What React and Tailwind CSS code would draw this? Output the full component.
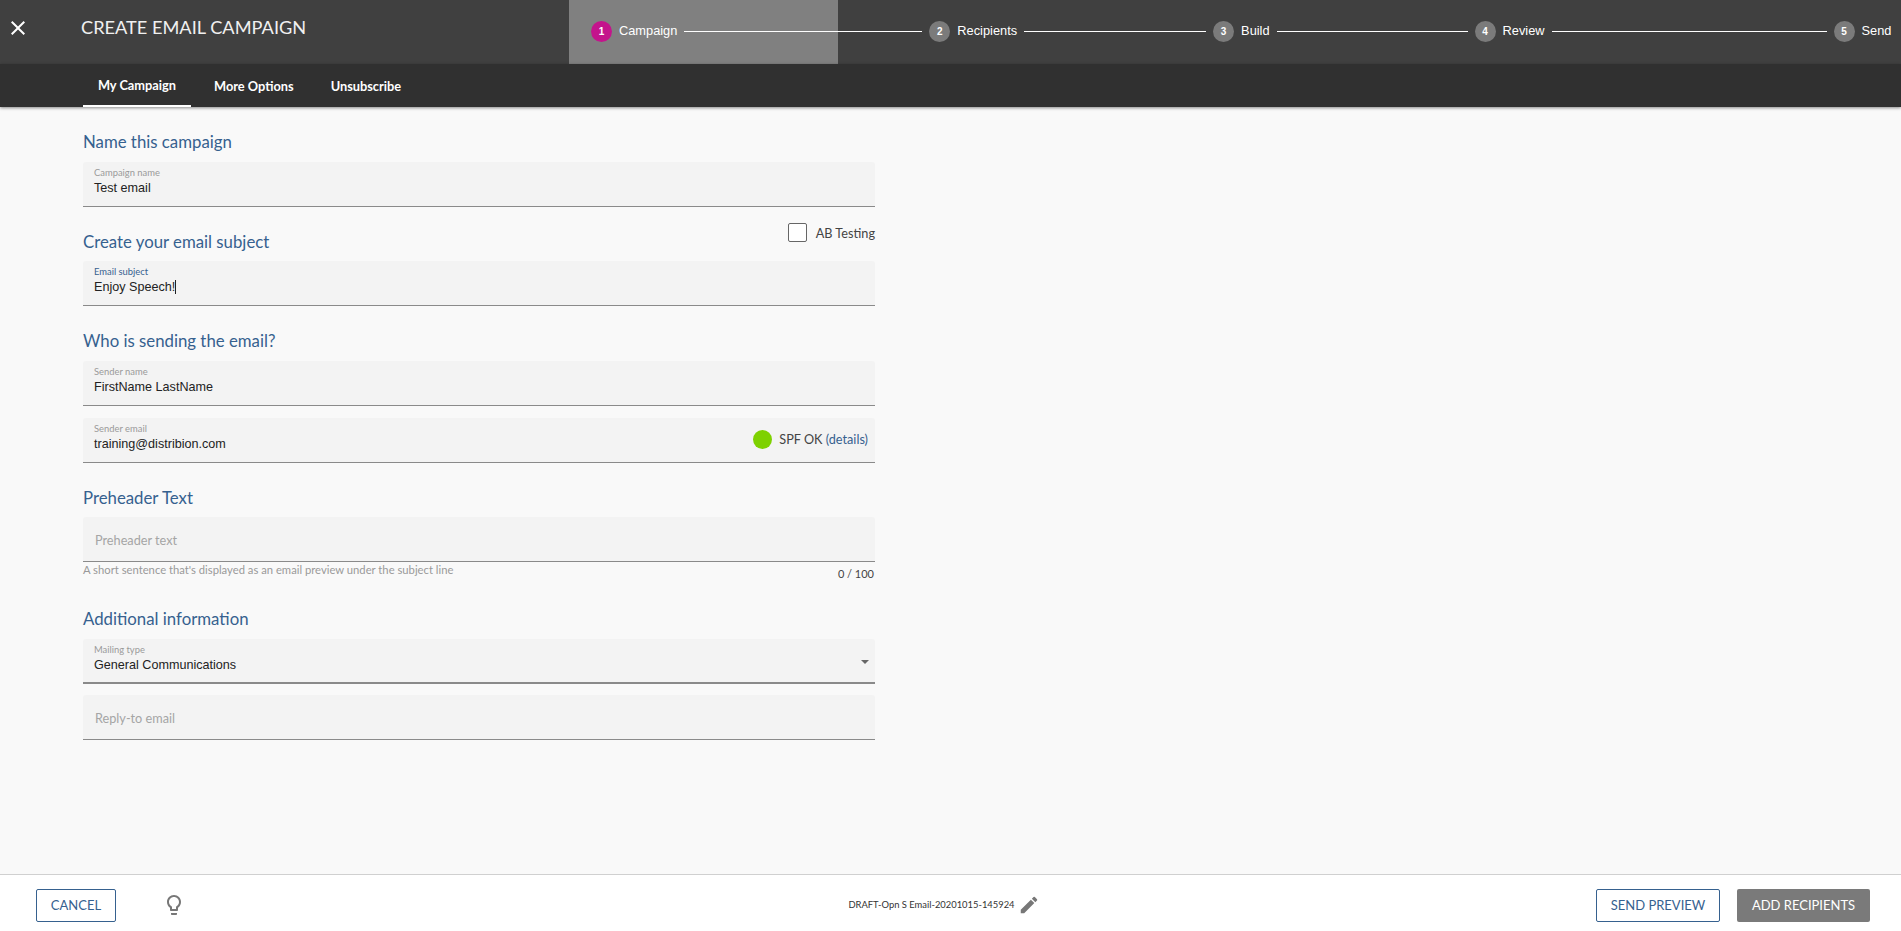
const lato = "font-['Lato',sans-serif]";
const arial = "font-['Liberation_Sans',Arial,sans-serif]";

function MatIcon({ d, className }) {
  return (
    <svg viewBox="0 0 24 24" className={className} fill="currentColor">
      <path d={d} />
    </svg>
  );
}

function Step({ n, label, active, line }) {
  return (
    <div className="flex items-center">
      <div className={`w-[21px] h-[21px] rounded-full flex items-center justify-center text-white text-[10px] font-bold ${active ? "bg-[#c4148c]" : "bg-[#7b7b7b]"}`}>{n}</div>
      <span className="ml-[7px] text-white text-[12.8px] leading-none -mt-[1px]">{label}</span>
      {line ? <div style={{ width: line }} className="ml-[7px] h-px bg-white" /> : null}
    </div>
  );
}

function Heading({ children, className = "" }) {
  return <h2 className={`${lato} text-[16.8px] leading-[22px] text-[#36618f] font-normal ${className}`}>{children}</h2>;
}

function Field({ label, value, placeholder, labelBlue, thick, caret, children, className = "" }) {
  return (
    <div className={`relative h-[45px] rounded-t-[3px] bg-[#f3f3f3] border-b border-[#8a8a8a] ${thick ? "border-b-2" : ""} ${className}`}>
      {placeholder ? (
        <div className={`${lato} pl-[12px] pt-[15px] text-[12.7px] leading-4 text-[#a5a5a5]`}>{placeholder}</div>
      ) : (
        <div className="pl-[11px] pt-[5px]">
          <div className={`${lato} text-[9.4px] leading-[11px] ${labelBlue ? "text-[#36618f]" : "text-[#9a9a9a]"}`}>{label}</div>
          <div className={`${arial} mt-[2px] text-[12.6px] leading-[16px] text-[#222] flex items-center`}>
            {value}
            {caret ? <span className="inline-block w-px h-[14px] bg-[#222]" /> : null}
          </div>
        </div>
      )}
      {children}
    </div>
  );
}

export default function App() {
  return (
    <div className="h-[931px] w-full flex flex-col bg-[#f9f9f9] overflow-hidden">
      <header className="relative h-[64px] shrink-0 bg-[#404040] flex">
        <div className="absolute left-[569px] top-0 w-[269px] h-full bg-[#808080]" />
        <MatIcon d="M19 6.41L17.59 5 12 10.59 6.41 5 5 6.41 10.59 12 5 17.59 6.41 19 12 13.41 17.59 19 19 17.59 13.41 12z" className="w-[24px] h-[24px] text-white ml-[6px] mt-[16px]" />
        <h1 className={`${lato} ml-[51px] mt-[15px] text-[18.2px] leading-[24px] text-[#f0f0f0] font-normal`}>CREATE EMAIL CAMPAIGN</h1>
        <div className={`${arial} absolute left-[591px] top-[21px] flex items-center`}>
          <Step n="1" label="Campaign" active line={238} />
          <div className="w-[7px]" />
          <Step n="2" label="Recipients" line={182} />
          <div className="w-[7px]" />
          <Step n="3" label="Build" line={191} />
          <div className="w-[7px]" />
          <Step n="4" label="Review" line={275} />
          <div className="w-[7px]" />
          <Step n="5" label="Send" />
        </div>
      </header>

      <nav className={`${lato} h-[43px] shrink-0 bg-[#303030] pl-[83px] flex text-white text-[12.8px] font-bold shadow-[0_1px_3px_rgba(0,0,0,0.45)] relative`}>
        <div className="w-[108px] pt-[2px] flex items-center justify-center border-b-2 border-white">My Campaign</div>
        <div className="ml-[23px] pt-[3px] flex items-center">More Options</div>
        <div className="ml-[37px] pt-[3px] flex items-center">Unsubscribe</div>
      </nav>

      <main className="flex-1 pl-[83px]">
        <div className="w-[792px]">
          <Heading className="mt-[24px] mb-[9px]">Name this campaign</Heading>
          <Field label="Campaign name" value="Test email" />

          <div className="flex justify-between mt-[24px] mb-[8px] items-start">
            <Heading>Create your email subject</Heading>
            <label className={`${lato} flex items-center text-[12.7px] leading-[18px] text-[#444] -mt-[8px]`}>
              <span className="w-[19px] h-[19px] rounded-[2px] border border-[#666] bg-white mr-[9px]" />
              AB Testing
            </label>
          </div>
          <Field label="Email subject" value="Enjoy Speech!" labelBlue caret />

          <Heading className="mt-[24px] mb-[9px]">Who is sending the email?</Heading>
          <Field label="Sender name" value="FirstName LastName" />
          <Field label="Sender email" value="training@distribion.com" className="mt-[12px]">
            <div className={`${lato} absolute right-[7px] top-[12px] flex items-center text-[12.7px] text-[#444]`}>
              <span className="w-[19px] h-[19px] rounded-full bg-[#7ed100] mr-[7px]" />
              SPF OK&nbsp;<span className="text-[#36618f]">(details)</span>
            </div>
          </Field>

          <Heading className="mt-[24px] mb-[8px]">Preheader Text</Heading>
          <Field placeholder="Preheader text" />
          <div className={`${lato} flex justify-between text-[#999] text-[11.25px] leading-[13px] pt-[1px]`}>
            <span>A short sentence that's displayed as an email preview under the subject line</span>
            <span className="text-[#444] text-[11px] pt-[4px] pr-[1px]">0 / 100</span>
          </div>

          <Heading className="mt-[28px] mb-[9px]">Additional information</Heading>
          <Field label="Mailing type" value="General Communications" thick>
            <div className="absolute right-[6px] top-[21px] w-0 h-0 border-l-[4px] border-r-[4px] border-t-[4px] border-l-transparent border-r-transparent border-t-[#666]" />
          </Field>
          <Field placeholder="Reply-to email" className="mt-[11px]" />
        </div>
      </main>

      <footer className="h-[57px] shrink-0 bg-white border-t border-[#d0d0d0] flex items-center pl-[36px] pr-[31px] pt-[4px]">
        <button className={`${lato} w-[80px] h-[33px] pt-[1px] rounded-[2px] border border-[#36618f] text-[#36618f] text-[13px]`}>CANCEL</button>
        <MatIcon d="M9 21c0 .55.45 1 1 1h4c.55 0 1-.45 1-1v-1H9v1zm3-19C8.14 2 5 5.14 5 9c0 2.38 1.19 4.47 3 5.74V17c0 .55.45 1 1 1h6c.55 0 1-.45 1-1v-2.26c1.81-1.27 3-3.36 3-5.74 0-3.86-3.14-7-7-7zm2.85 11.1l-.85.6V16h-4v-2.3l-.85-.6C7.8 12.16 7 10.63 7 9c0-2.76 2.24-5 5-5s5 2.24 5 5c0 1.63-.8 3.16-2.15 4.1z" className="ml-[46px] w-[24px] h-[24px] text-[#777]" />
        <div className="flex-1 flex items-center justify-center pl-[106px]">
          <span className={`${lato} text-[9.4px] text-[#333]`}>DRAFT-Opn S Email-20201015-145924</span>
          <MatIcon d="M3 17.25V21h3.75L17.81 9.94l-3.75-3.75L3 17.25zM20.71 7.04a1 1 0 0 0 0-1.41l-2.34-2.34a1 1 0 0 0-1.41 0l-1.83 1.83 3.75 3.75 1.83-1.83z" className="ml-[3px] w-[22px] h-[22px] text-[#777]" />
        </div>
        <button className={`${lato} w-[124px] h-[33px] pt-[1px] rounded-[2px] border border-[#36618f] text-[#36618f] text-[13px]`}>SEND PREVIEW</button>
        <button className={`${lato} ml-[17px] w-[133px] h-[33px] pt-[1px] rounded-[2px] bg-[#7a7a7a] text-white text-[13px]`}>ADD RECIPIENTS</button>
      </footer>
    </div>
  );
}
